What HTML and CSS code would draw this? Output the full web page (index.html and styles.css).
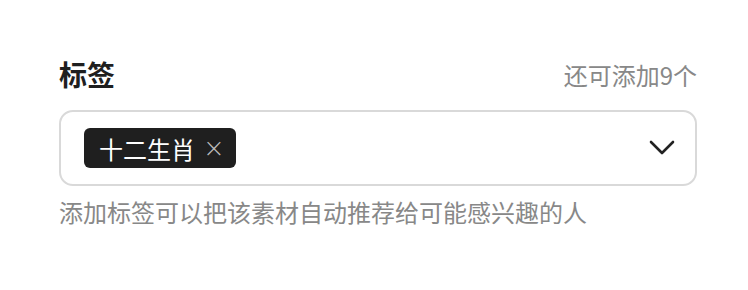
FILE: index.html
```
<!DOCTYPE html>
<html lang="zh-CN">
<head>
    <meta charset="UTF-8">
    <meta name="viewport" content="width=device-width, initial-scale=1.0">
    <title>标签</title>
    <link rel="stylesheet" href="styles.css">
</head>
<body>
    <div class="tag-field">
        <div class="tag-field-header">
            <span class="tag-field-label">标签</span>
            <span class="tag-field-count">还可添加9个</span>
        </div>

        <div class="tag-select">
            <div class="tag-list">
                <span class="tag">十二生肖<span class="tag-close">&times;</span></span>
            </div>
            <svg class="tag-arrow" width="26" height="16" viewBox="0 0 26 16">
                <path d="M2 2 L13 13 L24 2" fill="none" stroke="#222" stroke-width="2.6" stroke-linecap="round" stroke-linejoin="round"/>
            </svg>
        </div>

        <div class="tag-field-hint">添加标签可以把该素材自动推荐给可能感兴趣的人</div>
    </div>
</body>
</html>
```

FILE: styles.css
```
body {
    margin: 0;
    background-color: #fff;
    font-family: "Noto Sans CJK SC", "Noto Sans", sans-serif;
}

.tag-field {
    width: 638px;
    padding: 54px 0 0 59px;
}

.tag-field-header {
    display: flex;
    justify-content: space-between;
    align-items: center;
    height: 40px;
    margin-bottom: 16px;
}

.tag-field-label {
    font-size: 28px;
    font-weight: bold;
    color: #1f1f1f;
}

.tag-field-count {
    font-size: 24px;
    color: #888;
}

.tag-select {
    display: flex;
    align-items: center;
    justify-content: space-between;
    height: 72px;
    padding: 0 20px 0 23px;
    border: 2px solid #d9d9d9;
    border-radius: 14px;
}

.tag {
    display: inline-flex;
    align-items: center;
    height: 40px;
    padding: 0 11px 0 15px;
    background-color: #1f1f1f;
    border-radius: 6px;
    color: #fff;
    font-size: 24px;
}

.tag-close {
    margin-left: 8px;
    font-size: 26px;
    line-height: 1;
    color: #bbb;
    font-family: "DejaVu Sans", sans-serif;
    font-weight: 300;
}

.tag-field-hint {
    margin-top: 8px;
    font-size: 24px;
    color: #888;
}
```
